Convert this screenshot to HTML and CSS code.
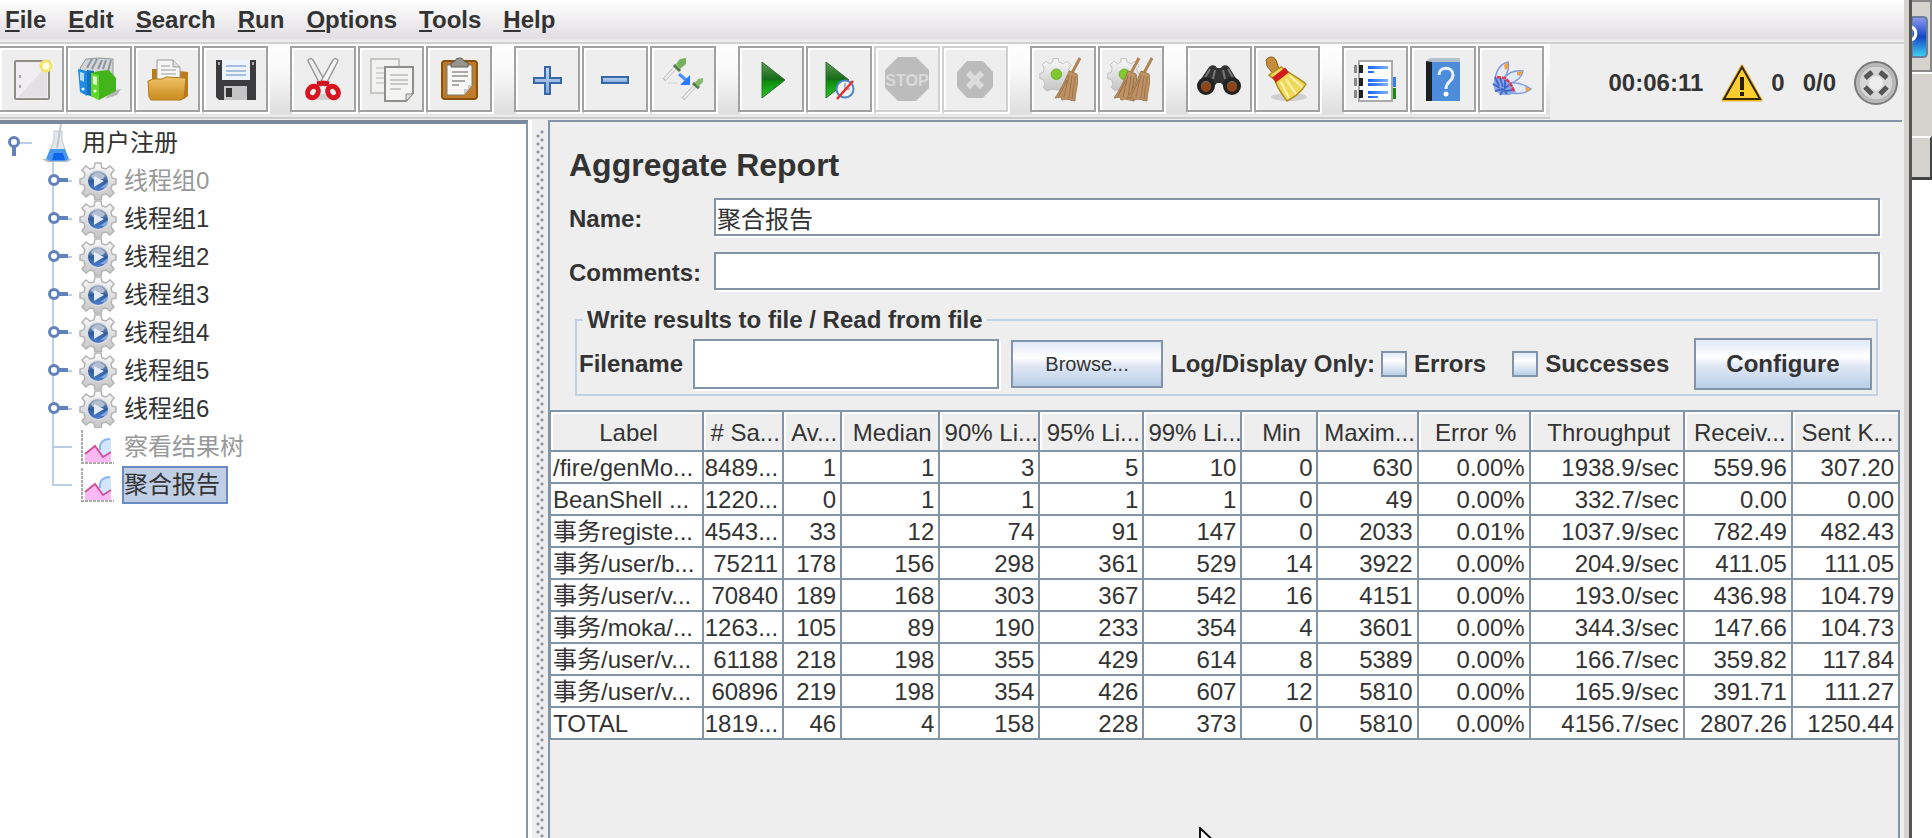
FILE: index.html
```html
<!DOCTYPE html>
<html lang="zh-CN">
<head>
<meta charset="utf-8">
<title>Aggregate Report</title>
<link rel="stylesheet" href="styles.css">
</head>
<body>
<svg class="defs" aria-hidden="true">
  <defs>
    <linearGradient id="steel" x1="0" y1="0" x2="0" y2="1"><stop offset="0" stop-color="#fafafa"/><stop offset="1" stop-color="#c4c4c4"/></linearGradient>
    <linearGradient id="orb" x1="0" y1="0" x2="0" y2="1"><stop offset="0" stop-color="#a9b8cd"/><stop offset=".5" stop-color="#2f5c99"/><stop offset="1" stop-color="#4d7fd0"/></linearGradient>
    <linearGradient id="play" x1="0" y1="0" x2="0" y2="1"><stop offset="0" stop-color="#5d9c5b"/><stop offset=".48" stop-color="#176a17"/><stop offset=".52" stop-color="#0c8a0c"/><stop offset="1" stop-color="#2cc42c"/></linearGradient>
    <linearGradient id="gold" x1="0" y1="0" x2="0" y2="1"><stop offset="0" stop-color="#f0c268"/><stop offset="1" stop-color="#c98a1c"/></linearGradient>
    <linearGradient id="blue" x1="0" y1="0" x2="0" y2="1"><stop offset="0" stop-color="#c3d8f0"/><stop offset="1" stop-color="#7ba6d8"/></linearGradient>
    <linearGradient id="line" x1="0" y1="0" x2="1" y2="0"><stop offset="0" stop-color="#1a62f0"/><stop offset="1" stop-color="#7fb2ff"/></linearGradient>
    <linearGradient id="app" x1="0" y1="0" x2="0" y2="1"><stop offset="0" stop-color="#8f9cf0"/><stop offset=".5" stop-color="#1545c4"/><stop offset="1" stop-color="#41d6f5"/></linearGradient>
    <symbol id="gear" viewBox="0 0 40 38">
      <path d="M17 1h6l1 5 4 1 4-3 4 4-3 4 1 4 4 1v5l-4 1-1 4 3 4-4 4-4-3-4 1-1 5h-6l-1-5-4-1-4 3-4-4 3-4-1-4-4-1v-5l4-1 1-4-3-4 4-4 4 3 4-1z" fill="url(#steel)" stroke="#b4b4b4" stroke-width="1.500"/>
      <circle cx="20" cy="19" r="11" fill="#dcdcdc"/>
      <circle cx="20" cy="19" r="10" fill="url(#orb)"/>
      <path d="M22 26h6a10 10 0 0 0 2-6z" fill="#7fa6e2"/>
      <path d="M13 14q7-7 14 0l-2 3H15z" fill="#b3bfd0"/>
      <path d="M16 14l10 5-10 6z" fill="#e4ebf4"/>
    </symbol>
    <symbol id="branch" viewBox="0 0 38 38">
      <path d="M13 0v38M20 19h12" stroke="#bccde8" stroke-width="2"/>
      <path d="M18 18h10" stroke="#6181bd" stroke-width="4"/>
      <circle cx="14" cy="18" r="4.500" fill="#fff" stroke="#6181bd" stroke-width="3"/>
    </symbol>
    <symbol id="chart" viewBox="0 0 40 38">
      <path d="M4 2v33h32" fill="none" stroke="#aaa" stroke-width="2" stroke-dasharray="3 1"/>
      <path d="M22 24c-2-8 0-12 8-13h3v20h-8z" fill="#d4e6fd"/><path d="M22 22c-1-7 3-11 10-11" fill="none" stroke="#85b5f7" stroke-width="2"/>
      <path d="M7 27l10-9 8 11 8-5v10H7z" fill="#fcb8f2"/>
      <path d="M7 26l10-8 8 11 8-5" fill="none" stroke="#d0549a" stroke-width="2"/>
    </symbol>
    <symbol id="broom" viewBox="0 0 30 48">
      <path d="M28 3L20 18" stroke="#b08454" stroke-width="3"/>
      <path d="M17 16l8 3c2 10-2 18-2 27l-9-2-4 1-1-3-6 1c5-7 10-17 14-27z" fill="#bd9264" stroke="#a07a50"/>
      <path d="M17 20l-5 22M20 21l-3 22M23 22l-3 22M15 25L7 41" stroke="#9a7148" fill="none"/>
    </symbol>
    <symbol id="cog" viewBox="0 0 48 48">
      <path d="M17 4h6l1 4 5 2 4-3 5 5-3 4 2 5 3 1v5l-4 1-2 5 2 4-4 4-5-3-4 2-8-1-5 2-4-4 2-4-2-5-4-1v-6l4-1 1-5-2-4 4-4 4 3 4-2z" fill="url(#steel)" stroke="#bbb"/>
      <circle cx="21" cy="22" r="6" fill="#80c82e" stroke="#6aa830"/>
    </symbol>
  </defs>
</svg>
<div class="screen">
  <div class="window">
    <nav class="menubar">
      <button type="button"><u>F</u>ile</button>
      <button type="button"><u>E</u>dit</button>
      <button type="button"><u>S</u>earch</button>
      <button type="button"><u>R</u>un</button>
      <button type="button"><u>O</u>ptions</button>
      <button type="button"><u>T</u>ools</button>
      <button type="button"><u>H</u>elp</button>
    </nav>
    <div class="topbar">
      <div class="toolbar">
        <div class="group">
          <button type="button" aria-label="New"><svg viewBox="0 0 48 48"><rect x="8" y="6" width="34" height="38" rx="1" fill="#f0eef0" stroke="#8e8e86" stroke-width="2"/><path d="M11 42L40 10v32z" fill="#e3e1e4"/><path d="M12 20h2v3h-2zM12 30h2v3h-2z" fill="#aaa"/><circle cx="39" cy="11" r="5" fill="#fffde0" stroke="#f2e36a" stroke-width="3"/></svg></button>
          <button type="button" aria-label="Templates"><svg viewBox="0 0 48 48"><path d="M36 36l10-2-4 6-12 4z" fill="#b5b5b5"/><path d="M5 13l6-9 13-1 14 1v18H8z" fill="#d2d6d8" stroke="#8e979b"/><path d="M12 13l5-9M17 14l5-10M23 14l4-9M28 14l3-9M33 16l3-11" stroke="#8e979b" stroke-width="2"/><path d="M3 14l9 2v25l-7-4z" fill="#1d8be0"/><path d="M12 15l7 1v26l-7-2z" fill="#1470bd"/><path d="M5 17l4 1v9l-4-2z" fill="#b4dcf8"/><path d="M16 18l8-2 10-1 7 8v13l-17 9-8-4z" fill="#43b41c"/><path d="M16 18l8 2v25l-8-4z" fill="#65d62c"/><path d="M18 21l4 1v8l-4-1z" fill="#e5fbd5"/><circle cx="8" cy="34" r="1.500" fill="#fff"/><circle cx="20" cy="36" r="1.500" fill="#fff"/></svg></button>
          <button type="button" aria-label="Open"><svg viewBox="0 0 48 48"><path d="M9 14h7v10h20V16l9 1v24l-4 3H9z" fill="#b97c1b"/><path d="M14 5h16l7 7v16H14z" fill="#f7f7f7" stroke="#999"/><path d="M30 5v7h7" fill="#ddd" stroke="#999"/><path d="M18 11h9M18 15h15M18 19h15" stroke="#999"/><path d="M5 26l5-2h9l4-2 20 1-2 20-3 2H8l-2-3z" fill="url(#gold)" stroke="#b27a1b"/></svg></button>
          <button type="button" aria-label="Save"><svg viewBox="0 0 48 48"><path d="M5 5h40v40H8l-3-3z" fill="#3c3c3f"/><path d="M11 5h28v20H11z" fill="#edf4fc"/><path d="M15 11h20M15 16h20M15 20h20" stroke="#a6bfe0" stroke-width="2"/><path d="M13 31h23v14H13z" fill="#c5c5c5"/><path d="M15 33h6v9h-6z" fill="#333"/><path d="M7 7h2v3H7zM41 7h2v3h-2z" fill="#aaa"/></svg></button>
        </div>
        <div class="group">
          <button type="button" aria-label="Cut"><svg viewBox="0 0 48 48"><ellipse cx="24" cy="42" rx="12" ry="3" fill="#d0d0d0"/><path d="M9 6c1-3 3-3 5-1l13 23-5 3z" fill="#eee" stroke="#999" stroke-width="1.500"/><path d="M39 6c-1-3-3-3-5-1L21 28l5 3z" fill="#f5f5f5" stroke="#999" stroke-width="1.500"/><path d="M18 29l6-1 6 1" stroke="#d01520" stroke-width="5" fill="none"/><ellipse cx="14" cy="37" rx="5" ry="6" transform="rotate(35 14 37)" fill="none" stroke="#d7141f" stroke-width="5"/><ellipse cx="34" cy="37" rx="5" ry="6" transform="rotate(-35 34 37)" fill="none" stroke="#d7141f" stroke-width="5"/></svg></button>
          <button type="button" aria-label="Copy"><svg viewBox="0 0 48 48"><rect x="4" y="4" width="28" height="34" fill="#f2f2f0" stroke="#b8b8b4" stroke-width="1.500"/><path d="M9 13h12M9 18h8M9 23h8M9 28h8" stroke="#ccc" stroke-width="1.500"/><path d="M18 12h28v26l-7 8H18z" fill="#f4f4f3" stroke="#8f8f8b" stroke-width="2"/><path d="M39 46v-7h7z" fill="#ddd" stroke="#8f8f8b"/><path d="M23 20h18M23 25h18M23 29h18M23 34h11" stroke="#bbb" stroke-width="1.500"/></svg></button>
          <button type="button" aria-label="Paste"><svg viewBox="0 0 48 48"><rect x="7" y="6" width="35" height="38" rx="3" fill="#c07c2a" stroke="#88530f" stroke-width="2"/><path d="M12 10h25v21l-8 9H12z" fill="#f8f8f6" stroke="#777"/><path d="M29 40v-6h4v-4h4z" fill="#ccc"/><path d="M17 17h16M17 21h16M17 26h13M17 30h7" stroke="#aaa" stroke-width="2"/><path d="M16 12V8l4-2c1-4 8-4 9 0l4 2v4z" fill="#96968f" stroke="#5f5f5a"/></svg></button>
        </div>
        <div class="group">
          <button type="button" aria-label="Expand all"><svg viewBox="0 0 48 48"><path d="M22 12h5v11h11v5H27v11h-5V28H11v-5h11z" fill="url(#blue)" stroke="#3767a8" stroke-width="2"/></svg></button>
          <button type="button" aria-label="Collapse all"><svg viewBox="0 0 48 48"><path d="M11 22h26v6H11z" fill="url(#blue)" stroke="#3767a8" stroke-width="2"/></svg></button>
          <button type="button" aria-label="Toggle"><svg viewBox="0 0 48 48"><path d="M5 25L17 12M24 44l12-13" stroke="#c2c2c4" stroke-width="4"/><path d="M6 24L17 12M25 43l11-12" stroke="#f0f0f0" stroke-width="2"/><path d="M9 28h9" stroke="#e0e0e0" stroke-width="2"/><path d="M15 10l6 6" stroke="#4f7a45" stroke-width="3"/><path d="M17 9l4-5 6-1v6l-6 5z" fill="#77b35c"/><path d="M34 28l6 5" stroke="#4f7a45" stroke-width="3"/><path d="M36 28l3-4 5-1v4l-5 5z" fill="#85ba6c"/><path d="M20 19l7 6" stroke="#4d90ff" stroke-width="3"/><path d="M31 20v10H21z" fill="#2a7bff"/></svg></button>
        </div>
        <div class="group">
          <button type="button" aria-label="Start"><svg viewBox="0 0 48 48"><path d="M15 7l23 18-23 18z" fill="url(#play)" stroke="#2d6f2d"/></svg></button>
          <button type="button" aria-label="Start no pauses"><svg viewBox="0 0 48 48"><path d="M11 7l23 18-23 18z" fill="url(#play)" stroke="#2d6f2d"/><circle cx="30" cy="34" r="8.500" fill="#f0f2f4" stroke="#4a86c8" stroke-width="2"/><path d="M30 28v6h5M26 38l4-4" stroke="#777" fill="none"/><path d="M22 44l16-18" stroke="#e33030" stroke-width="2.500"/></svg></button>
          <button type="button" aria-label="Stop" disabled><svg viewBox="0 0 48 48"><path d="M15 2h18l13 13v18L33 46H15L2 33V15z" fill="#bcbcbc"/><text x="24" y="31" class="stop-text">STOP</text></svg></button>
          <button type="button" aria-label="Shutdown" disabled><svg viewBox="0 0 48 48"><path d="M16 6h16l10 11v15L32 43H16L6 32V17z" fill="#bcbcbc"/><path d="M17 18l14 14M31 18L17 32" stroke="#dcdcdc" stroke-width="6"/></svg></button>
        </div>
        <div class="group">
          <button type="button" aria-label="Clear"><svg viewBox="0 0 48 48"><use href="#cog" x="-1" width="42" height="42"/><use href="#broom" x="13" width="30" height="48"/></svg></button>
          <button type="button" aria-label="Clear all"><svg viewBox="0 0 48 48"><use href="#cog" x="-1" width="42" height="42"/><use href="#broom" x="4" width="30" height="48"/><use href="#broom" x="17" width="30" height="48"/></svg></button>
        </div>
        <div class="group">
          <button type="button" aria-label="Search"><svg viewBox="0 0 48 48"><path d="M14 12c3-3 7-2 8 1h4c1-3 5-4 8-1l11 18-10 8-9-10h-4l-9 10-11-8z" fill="#333"/><path d="M15 14l-8 14M33 14l8 14M20 15l-2 9M28 15l2 9" stroke="#777" stroke-width="2"/><circle cx="11" cy="31" r="7" fill="#777" stroke="#222" stroke-width="4"/><circle cx="37" cy="31" r="7" fill="#777" stroke="#222" stroke-width="4"/><circle cx="11" cy="32" r="5" fill="#8c4516"/><circle cx="37" cy="32" r="5" fill="#8c4516"/></svg></button>
          <button type="button" aria-label="Reset search"><svg viewBox="0 0 48 48"><ellipse cx="26" cy="42" rx="18" ry="4" fill="#cfcfcf"/><path d="M3 5c3-4 8-4 10 0l4 12-6 3-7-9z" fill="#c58d3b" stroke="#8b5f1c"/><path d="M6 20l12-8 6 4c7 5 13 8 19 13-5 9-12 13-19 17-5-7-10-13-12-21z" fill="#f0d85d" stroke="#ad8b1d" stroke-width="1.500"/><path d="M18 27l8 16M23 24l10 15M27 21l12 11" stroke="#fff4a8" stroke-width="2"/><path d="M11 25l13-10" stroke="#d21d1d" stroke-width="6"/></svg></button>
        </div>
        <div class="group">
          <button type="button" aria-label="Function helper"><svg viewBox="0 0 48 48"><path d="M41 22h4v10h-4z" fill="#2f80f0"/><path d="M41 33h4v11h-4z" fill="#178a17"/><path d="M8 6h33v40H8z" fill="#fff" stroke="#aaa" stroke-width="2"/><path d="M8 10h4v8H8zM8 23h4v8H8zM8 35h4v8H8z" fill="#222"/><path d="M3 10h3v8H3zM3 23h3v8H3zM3 35h3v8H3z" fill="#888"/><path d="M17 11h20v3H17zM17 16h6v2h-6zM17 24h20v3H17zM17 28h20v3H17zM17 36h20v3H17zM17 41h10v2H17z" fill="url(#line)"/></svg></button>
          <button type="button" aria-label="Help"><svg viewBox="0 0 48 48"><path d="M7 6l4-3h30v4L13 8z" fill="#b4c2cf"/><path d="M7 6l6 1v39H7z" fill="#1c1f24"/><path d="M13 7h28v39H13z" fill="#4c8cdb"/><path d="M20 20c0-9 14-9 14 0 0 7-7 6-7 14" fill="none" stroke="#e9f3ff" stroke-width="3"/><circle cx="27" cy="39" r="2.500" fill="#fff"/></svg></button>
          <button type="button" aria-label="Apache"><svg viewBox="0 0 48 48"><path d="M8 25c1-9 5-16 13-18 2 6-1 12-4 17z" fill="#e3eafa" stroke="#7d9ae0" stroke-width="1.500"/><path d="M17 23c5-6 11-8 19-7-1 7-8 11-14 13z" fill="#e3eafa" stroke="#7d9ae0" stroke-width="1.500"/><path d="M21 28c9-1 16 1 23 6-6 5-13 5-19 4z" fill="#e3eafa" stroke="#7d9ae0" stroke-width="1.500"/><path d="M8 23l10 0 7 6 4 8-6 3-8 0-7-4-2-7z" fill="#8fa9e4"/><path d="M8 22l4 9M13 23l3 9M18 25l0 8M22 30l-5 4M26 35l-8 1M6 29l7 4M8 36l8-2M13 40l4-6M20 39l-3-4" stroke="#3f68cb" stroke-width="2"/><path d="M17 10l4-3v6l-3 2zM30 17l6-1-3 5-3-1zM38 32l6 2-5 3z" fill="#f2a13c"/><path d="M10 22l8 1 5 5 4 8" fill="none" stroke="#ea3048" stroke-width="2.500" stroke-dasharray="4 1"/></svg></button>
        </div>
      </div>
      <div class="status">
        <span>00:06:11</span>
        <div class="warning"><svg class="warn-icon" viewBox="0 0 42 38" aria-hidden="true"><path d="M21 2l19 34H2z" fill="#fdca22" stroke="#f0b518" stroke-width="3" stroke-linejoin="round"/><path d="M21 3l18 32H3z" fill="#fdcc2e" stroke="#33290a" stroke-width="2"/><path d="M19 13h4v13h-4zM19 28h4v4h-4z" fill="#221c08"/></svg><span>0</span></div>
        <span>0/0</span>
        <svg class="round-icon" viewBox="0 0 44 44" aria-hidden="true"><circle cx="22" cy="22" r="21" fill="#bbb" stroke="#7a7a7a" stroke-width="2"/><circle cx="22" cy="22" r="17" fill="#d6d6d6" stroke="#a9a9a9"/><circle cx="22" cy="22" r="7" fill="#ededed"/><path d="M11 17l7-6M26 11l7 6M33 26l-7 7M18 33l-7-7" stroke="#555" stroke-width="5"/></svg>
      </div>
    </div>
    <div class="workspace">
      <aside class="tree-panel">
        <div class="tree-row root"><svg class="root-handle" viewBox="0 0 40 38" aria-hidden="true"><path d="M18 19h14" stroke="#bccde8" stroke-width="2"/><path d="M14 22v10" stroke="#6181bd" stroke-width="4"/><circle cx="14" cy="18" r="4.500" fill="#fff" stroke="#6181bd" stroke-width="3"/></svg><svg class="flask" viewBox="0 0 40 38" aria-hidden="true"><path d="M12 38h3" stroke="#bccde8" stroke-width="2"/><path d="M2 35h30l-4 3H7z" fill="#b5bdc8"/><path d="M14 7h8v9l6 20H7l7-20z" fill="#e3e9ef" stroke="#c4cbd3"/><path d="M10 25h15l4 10-4 2H10l-4-2z" fill="#4a98ee"/><path d="M14 29h9l2 7H12z" fill="#0d66e6"/><path d="M21 0l-4 24" stroke="#c5c9cc" stroke-width="2"/></svg><span>用户注册</span></div>
        <ul class="tree">
          <li class="tree-row off"><svg class="branch"><use href="#branch"/></svg><svg class="node"><use href="#gear"/></svg><span>线程组0</span></li>
          <li class="tree-row"><svg class="branch"><use href="#branch"/></svg><svg class="node"><use href="#gear"/></svg><span>线程组1</span></li>
          <li class="tree-row"><svg class="branch"><use href="#branch"/></svg><svg class="node"><use href="#gear"/></svg><span>线程组2</span></li>
          <li class="tree-row"><svg class="branch"><use href="#branch"/></svg><svg class="node"><use href="#gear"/></svg><span>线程组3</span></li>
          <li class="tree-row"><svg class="branch"><use href="#branch"/></svg><svg class="node"><use href="#gear"/></svg><span>线程组4</span></li>
          <li class="tree-row"><svg class="branch"><use href="#branch"/></svg><svg class="node"><use href="#gear"/></svg><span>线程组5</span></li>
          <li class="tree-row"><svg class="branch"><use href="#branch"/></svg><svg class="node"><use href="#gear"/></svg><span>线程组6</span></li>
          <li class="tree-row off"><svg class="branch" viewBox="0 0 38 38"><path d="M13 0v38M13 19h19" stroke="#bccde8" stroke-width="2"/></svg><svg class="node"><use href="#chart"/></svg><span>察看结果树</span></li>
          <li class="tree-row selected"><svg class="branch" viewBox="0 0 38 38"><path d="M13 0v19h19" fill="none" stroke="#bccde8" stroke-width="2"/></svg><svg class="node"><use href="#chart"/></svg><span>聚合报告</span></li>
        </ul>
      </aside>
      <div class="splitter"></div>
      <main class="report">
        <div class="form">
          <h1>Aggregate Report</h1>
          <div class="field"><label for="name">Name:</label><input id="name" type="text" value="聚合报告"></div>
          <div class="field"><label for="comments">Comments:</label><input id="comments" type="text"></div>
          <fieldset>
            <legend>Write results to file / Read from file</legend>
            <div class="file-row">
              <label for="filename">Filename</label>
              <input id="filename" class="filename" type="text">
              <button type="button" class="browse">Browse...</button>
              <span class="log-only">Log/Display Only:</span>
              <label class="check errors"><input type="checkbox">Errors</label>
              <label class="check"><input type="checkbox">Successes</label>
              <button type="button" class="configure">Configure</button>
            </div>
          </fieldset>
        </div>
        <div class="table-pane">
          <table>
            <thead><tr><th>Label</th><th># Sa...</th><th>Av...</th><th>Median</th><th>90% Li...</th><th>95% Li...</th><th>99% Li...</th><th>Min</th><th>Maxim...</th><th>Error %</th><th>Throughput</th><th>Receiv...</th><th>Sent K...</th></tr></thead>
            <tbody>
              <tr><td>/fire/genMo...</td><td>8489...</td><td>1</td><td>1</td><td>3</td><td>5</td><td>10</td><td>0</td><td>630</td><td>0.00%</td><td>1938.9/sec</td><td>559.96</td><td>307.20</td></tr>
              <tr><td>BeanShell ...</td><td>1220...</td><td>0</td><td>1</td><td>1</td><td>1</td><td>1</td><td>0</td><td>49</td><td>0.00%</td><td>332.7/sec</td><td>0.00</td><td>0.00</td></tr>
              <tr><td>事务registe...</td><td>4543...</td><td>33</td><td>12</td><td>74</td><td>91</td><td>147</td><td>0</td><td>2033</td><td>0.01%</td><td>1037.9/sec</td><td>782.49</td><td>482.43</td></tr>
              <tr><td>事务/user/b...</td><td>75211</td><td>178</td><td>156</td><td>298</td><td>361</td><td>529</td><td>14</td><td>3922</td><td>0.00%</td><td>204.9/sec</td><td>411.05</td><td>111.05</td></tr>
              <tr><td>事务/user/v...</td><td>70840</td><td>189</td><td>168</td><td>303</td><td>367</td><td>542</td><td>16</td><td>4151</td><td>0.00%</td><td>193.0/sec</td><td>436.98</td><td>104.79</td></tr>
              <tr><td>事务/moka/...</td><td>1263...</td><td>105</td><td>89</td><td>190</td><td>233</td><td>354</td><td>4</td><td>3601</td><td>0.00%</td><td>344.3/sec</td><td>147.66</td><td>104.73</td></tr>
              <tr><td>事务/user/v...</td><td>61188</td><td>218</td><td>198</td><td>355</td><td>429</td><td>614</td><td>8</td><td>5389</td><td>0.00%</td><td>166.7/sec</td><td>359.82</td><td>117.84</td></tr>
              <tr><td>事务/user/v...</td><td>60896</td><td>219</td><td>198</td><td>354</td><td>426</td><td>607</td><td>12</td><td>5810</td><td>0.00%</td><td>165.9/sec</td><td>391.71</td><td>111.27</td></tr>
              <tr><td>TOTAL</td><td>1819...</td><td>46</td><td>4</td><td>158</td><td>228</td><td>373</td><td>0</td><td>5810</td><td>0.00%</td><td>4156.7/sec</td><td>2807.26</td><td>1250.44</td></tr>
            </tbody>
          </table>
        </div>
      </main>
    </div>
  </div>
  <div class="desktop">
    <div class="app-slot"><svg viewBox="0 0 16 42" aria-hidden="true"><path d="M0 1h11q4 0 4 4v32q0 4-4 4H0z" fill="url(#app)" stroke="#6b7f9c" stroke-width="2"/><path d="M0 11a6 7 0 0 1 0 13" fill="none" stroke="#fff" stroke-width="3"/></svg></div>
    <div class="app-gap"></div>
    <div class="app-block"></div>
  </div>
  <svg class="cursor" viewBox="0 0 24 36" aria-hidden="true"><path d="M1 1v28l7-6 5 11 4-2-5-11h10z" fill="#fff" stroke="#111" stroke-width="2"/></svg>
</div>
</body>
</html>
```
FILE: styles.css
```css
* { box-sizing: border-box; }

body {
  margin: 0;
  background: #eee;
  color: #333;
  font-family: "Liberation Sans", "Noto Sans CJK SC", sans-serif;
  font-size: 24px;
  line-height: 28px;
}

button, input { font: inherit; color: inherit; }
.defs { position: absolute; width: 0; height: 0; }

.screen {
  position: relative;
  display: flex;
  height: 100vh;
  overflow: hidden;
}

.window {
  flex: 1;
  min-width: 0;
  display: flex;
  flex-direction: column;
  border-right: 3px solid #555;
  box-shadow: inset -5px 0 #d6d3ce;
  padding-right: 5px;
}

/* Menu bar */
.menubar {
  display: flex;
  gap: 22px;
  height: 44px;
  padding: 6px 5px 0;
  align-items: flex-start;
  background: linear-gradient(#fff, #e2dfe2 38px, #efefef 41px, #efefef 42px, #d0d0d0 42px);
}
.menubar button {
  border: 0;
  padding: 0;
  background: none;
  font-weight: bold;
}
.menubar u { text-decoration-thickness: 2px; text-underline-offset: 2px; text-decoration-skip-ink: none; }

/* Tool bar */
.topbar {
  display: flex;
  height: 76px;
  border-bottom: 1px solid #eee;
}
.toolbar {
  display: flex;
  gap: 22px;
  margin-left: -2px;
  padding: 2px 6px 0 0;
  background: linear-gradient(#fff, #fafafa 25px, #dedede 70px, #eaeaea 71px, #eaeaea 73px, #cdcdcd 73px);
}
.group { display: flex; gap: 2px; }
.group button {
  width: 66px;
  height: 66px;
  padding: 0;
  border: 2px solid #a2a2a2;
  background: #eee;
  box-shadow: inset 2px 2px #fff, 2px 2px #fff;
  display: grid;
  place-items: center;
}
.group button:disabled { border-color: #d0d0d0; }
.group svg { width: 48px; height: 48px; }
.stop-text { font-size: 16px; font-weight: bold; fill: #dadada; text-anchor: middle; }

.status {
  flex: 1;
  display: flex;
  align-items: center;
  justify-content: flex-end;
  gap: 18px;
  padding: 2px 6px 0 0;
  font-weight: bold;
}
.warning { display: flex; align-items: center; gap: 8px; }
.warn-icon { width: 42px; height: 38px; }
.round-icon { width: 44px; height: 44px; }

/* Work area */
.workspace { flex: 1; min-height: 0; display: flex; }

.tree-panel {
  width: 528px;
  flex: none;
  background: #fff;
  border-top: 4px solid #7a8a9c;
  border-right: 2px solid #8796a8;
}
.tree { list-style: none; margin: 0; padding: 0 0 0 40px; }
.tree-row { display: flex; align-items: center; height: 38px; }
.tree-row span { line-height: 34px; border: 2px solid transparent; white-space: nowrap; }
.root-handle, .flask { width: 40px; height: 38px; }
.branch { width: 38px; height: 38px; }
.node { width: 40px; height: 38px; margin-right: 4px; }
.off span { color: #999; }
.selected span {
  padding-right: 6px;
  border-color: #6a8ac4;
  background: #bfcee5;
}

.splitter {
  width: 20px;
  flex: none;
  border-left: 4px solid #fff;
  background:
    radial-gradient(circle at 2px 2px, #8796a8 1px, transparent 2px) 4px 8px / 8px 8px content-box,
    radial-gradient(circle at 6px 6px, #8796a8 1px, transparent 2px) 4px 8px / 8px 8px content-box,
    #eee;
  padding: 10px 4px 0;
}

.report {
  flex: 1;
  min-width: 0;
  display: flex;
  flex-direction: column;
  margin-right: 2px;
  border-top: 2px solid #8394a8;
  border-left: 2px solid #8394a8;
}
.form { padding: 24px 22px 0 19px; }
h1 { margin: 0 0 14px; font-size: 32px; line-height: 38px; font-weight: bold; }
label, legend, .log-only { font-weight: bold; white-space: nowrap; }

.field { display: flex; align-items: center; margin-bottom: 16px; }
.field label { width: 145px; padding-top: 4px; }
input[type="text"] {
  min-width: 0;
  height: 38px;
  padding: 0 1px;
  border: 2px solid #8394a8;
  border-radius: 0;
  background: #fff;
  box-shadow: 2px 2px #fff;
}
.field input { flex: 1; }

fieldset {
  margin: 14px 2px 0 6px;
  padding: 4px 4px 4px 2px;
  border: 2px solid #c2d1e8;
  min-width: 0;
}
legend { margin-left: 4px; padding: 0 4px; }
.file-row { display: flex; align-items: center; }
.file-row .filename { width: 306px; height: 50px; margin: 0 12px 0 10px; }
.file-row button {
  padding: 0;
  border: 2px solid #8394a8;
  background: linear-gradient(#dfe9f7, #fff 35%, #dfe7f5 55%, #b9d0e8);
}
.file-row .browse { width: 152px; height: 48px; margin-right: 8px; font-size: 20px; }
.file-row .configure { width: 178px; height: 52px; margin-left: auto; font-weight: bold; }
.log-only { margin-right: 6px; }
.check { display: flex; align-items: center; gap: 7px; }
.errors { margin-right: 26px; }
.check input {
  appearance: none;
  width: 26px;
  height: 26px;
  margin: 0;
  border: 2px solid #8394a8;
  background: linear-gradient(#dfe9f7, #fff 35%, #b9d0e8);
}

/* Results table */
.table-pane {
  flex: 1;
  min-height: 0;
  margin: 14px 2px 0 0;
  border-top: 2px solid #8394a8;
  border-right: 2px solid #8394a8;
}
table {
  width: 100%;
  table-layout: fixed;
  border-collapse: separate;
  border-spacing: 0;
  border-left: 1px solid #8394a8;
}
th, td {
  padding: 2px 4px 0 0;
  border-right: 2px solid #8394a8;
  border-bottom: 2px solid #8394a8;
  overflow: hidden;
  white-space: nowrap;
}
th:last-child, td:last-child { border-right-width: 0; }
th {
  height: 40px;
  padding: 4px 0 0 4px;
  font-weight: normal;
  text-align: center;
  background: #eee;
  box-shadow: inset 2px 2px #fff;
}
td { height: 32px; background: #fff; text-align: right; }
td:first-child { padding: 2px 0 0 2px; text-align: left; }
th:nth-child(1) { width: 153px; }
th:nth-child(2) { width: 80px; }
th:nth-child(3) { width: 58px; }
th:nth-child(4) { width: 98px; }
th:nth-child(5) { width: 100px; }
th:nth-child(6) { width: 104px; }
th:nth-child(7) { width: 98px; }
th:nth-child(8) { width: 76px; }
th:nth-child(9) { width: 100px; }
th:nth-child(10) { width: 112px; }
th:nth-child(11) { width: 154px; }
th:nth-child(12) { width: 108px; }
th:nth-child(13) { width: 105px; }

/* Desktop edge beside the window */
.desktop { width: 20px; flex: none; background: #fff; }
.app-slot {
  height: 72px;
  padding-top: 14px;
  background: #d6d3ce;
  border: solid #888;
  border-width: 2px 2px 2px 0;
}
.app-slot svg { display: block; width: 16px; height: 42px; }
.app-gap { height: 64px; background: #d6d3ce; border-top: 2px solid #fff; }
.app-block {
  height: 44px;
  background: #d6d3ce;
  border-top: 2px solid #fff;
  border-right: 2px solid #444;
  border-bottom: 3px solid #444;
}

.cursor { position: absolute; left: 1199px; top: 827px; width: 24px; height: 36px; }
```
